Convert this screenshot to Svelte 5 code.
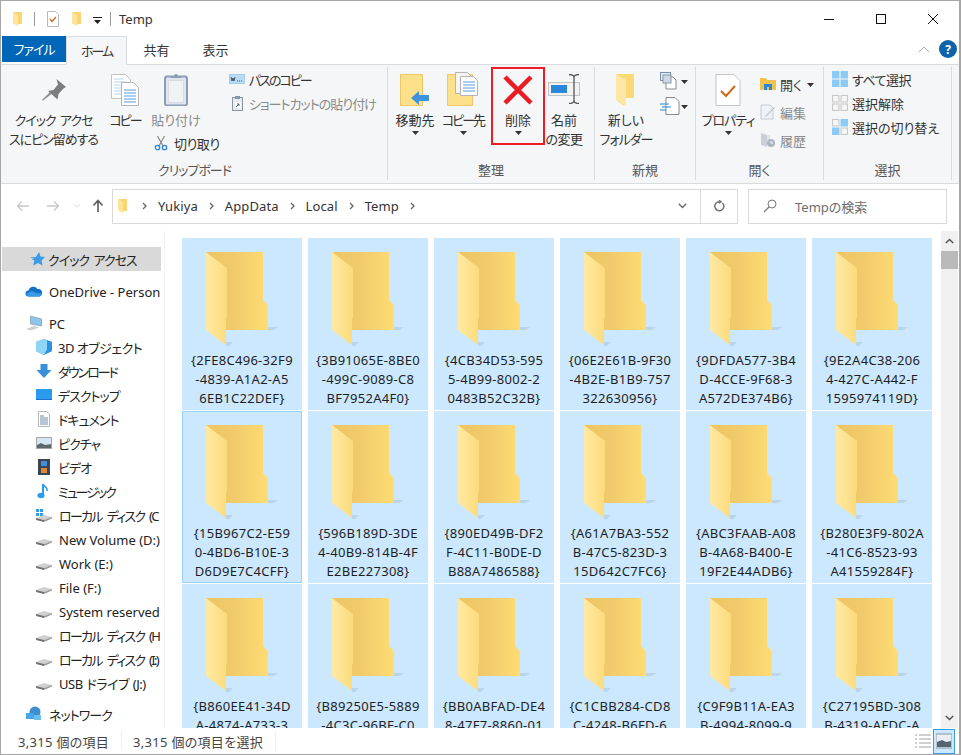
<script>
  const files = [
    ['{2FE8C496-32F9', '-4839-A1A2-A5', '6EB1C22DEF}'],
    ['{3B91065E-8BE0', '-499C-9089-C8', 'BF7952A4F0}'],
    ['{4CB34D53-595', '5-4B99-8002-2', '0483B52C32B}'],
    ['{06E2E61B-9F30', '-4B2E-B1B9-757', '322630956}'],
    ['{9DFDA577-3B4', 'D-4CCE-9F68-3', 'A572DE374B6}'],
    ['{9E2A4C38-206', '4-427C-A442-F', '1595974119D}'],
    ['{15B967C2-E59', '0-4BD6-B10E-3', 'D6D9E7C4CFF}'],
    ['{596B189D-3DE', '4-40B9-814B-4F', 'E2BE227308}'],
    ['{890ED49B-DF2', 'F-4C11-B0DE-D', 'B88A7486588}'],
    ['{A61A7BA3-552', 'B-47C5-823D-3', '15D642C7FC6}'],
    ['{ABC3FAAB-A08', 'B-4A68-B400-E', '19F2E44ADB6}'],
    ['{B280E3F9-802A', '-41C6-8523-93', 'A41559284F}'],
    ['{B860EE41-34D', 'A-4874-A733-3'],
    ['{B89250E5-5889', '-4C3C-96BF-C0'],
    ['{BB0ABFAD-DE4', '8-47F7-8860-01'],
    ['{C1CBB284-CD8', 'C-4248-B6FD-6'],
    ['{C9F9B11A-EA3', 'B-4994-8099-9'],
    ['{C27195BD-308', 'B-4319-AFDC-A']
  ];

  const focused = 6;

  const drives = [
    { label: 'ローカル ディスク (C', win: true, cls: 'kd' },
    { label: 'New Volume (D:)', cls: 'lat' },
    { label: 'Work (E:)', cls: 'lat' },
    { label: 'File (F:)', cls: 'lat' },
    { label: 'System reserved', cls: 'lat' },
    { label: 'ローカル ディスク (H', cls: 'kd' },
    { label: 'ローカル ディスク (I:)', cls: 'kd' },
    { label: 'USB ドライブ (J:)', cls: 'k05 usb' }
  ];
</script>

{#snippet smallFolder()}
  <svg class="ico16" viewBox="0 0 16 16">
    <path d="M3 1h9v12H8v2L3 12z" fill="#fbd56f" />
    <path d="M3 1l5 3v11l-5-3z" fill="#fde49a" />
  </svg>
{/snippet}

{#snippet disk(win)}
  <svg class="ico16 wide" viewBox="0 0 18 16">
    {#if win}
      <rect x="1" y="2" width="3" height="3" fill="#2f9be8" />
      <rect x="5" y="2" width="3" height="3" fill="#2f9be8" />
      <rect x="1" y="6" width="3" height="3" fill="#2f9be8" />
      <rect x="5" y="6" width="3" height="3" fill="#2f9be8" />
    {/if}
    <path d="M1 11l8-3 8 2-8 3z" fill="#d0d0d0" />
    <path d="M1 11l8 2v2l-8-2z" fill="#6e6e6e" />
    <path d="M9 13l8-3v1.500l-8 3.500z" fill="#9a9a9a" />
  </svg>
{/snippet}

{#snippet caret()}
  <svg class="caret" viewBox="0 0 7 4"><path d="M0 0h7L3.500 4z" fill="#333" /></svg>
{/snippet}

{#snippet chevron()}
  <svg class="chev" viewBox="0 0 5 8"><path d="M1 1l3 3-3 3" fill="none" stroke="#6a6a6a" stroke-width="1.400" /></svg>
{/snippet}

<div class="window">
  <header class="titlebar">
    <div class="qat">
      {@render smallFolder()}
      <span class="bar"></span>
      <svg class="ico16" viewBox="0 0 16 16">
        <path d="M2.500.500h8l3 3v12h-11z" fill="#fff" stroke="#b9b9b9" />
        <path d="M5 8l2 2.500L11 6" fill="none" stroke="#d2691e" stroke-width="1.300" />
      </svg>
      {@render smallFolder()}
      <svg class="qat-drop" viewBox="0 0 9 7">
        <rect y="0" width="9" height="1" fill="#222" />
        <path d="M1 3h7L4.500 7z" fill="#222" />
      </svg>
      <span class="bar"></span>
      <span class="title">Temp</span>
    </div>
    <div class="winbtns">
      <svg viewBox="0 0 12 12"><path d="M1 6.500h10" stroke="#111" fill="none" /></svg>
      <svg viewBox="0 0 12 12"><rect x="1.500" y="1.500" width="9" height="9" stroke="#111" fill="none" /></svg>
      <svg viewBox="0 0 12 12"><path d="M1 1l10 10M11 1L1 11" stroke="#111" fill="none" /></svg>
    </div>
  </header>

  <nav class="tabs">
    <span class="tab file k1">ファイル</span>
    <span class="tab active k2">ホーム</span>
    <span class="tab">共有</span>
    <span class="tab">表示</span>
    <span class="tabs-right">
      <svg class="collapse" viewBox="0 0 12 7"><path d="M.500 6.500L6 1l5.500 5.500" fill="none" stroke="#b0b0b0" /></svg>
      <span class="help">?</span>
    </span>
  </nav>

  <section class="ribbon">
    <div class="group g-clip">
      <div class="group-body">
        <div class="btn w-pin">
          <svg class="big pin" viewBox="0 0 24 22">
            <path d="M14.500 0L24 8l-2.500 1.500-5 5.500-1 5.500L6 12l5.500-1 4.500-5.500z" fill="#7b7d80" />
            <path d="M8 13l-8 8 .800.800 9-7z" fill="#8c8e90" />
          </svg>
          <span class="k1">クイック アクセ<br />スにピン留めする</span>
        </div>
        <div class="btn w-copy">
          <svg class="big" viewBox="0 0 28 32">
            <path d="M.500.500h14l5 5v19H.500z" fill="#fff" stroke="#c4c4c4" />
            <path d="M3 5h9M3 8h13M3 11h13M3 14h13M3 17h13M3 20h13" stroke="#b9d5f0" />
            <path d="M10.500 8.500h12l5 5v18h-17z" fill="#fff" stroke="#b5b5b5" />
            <path d="M13 16h12M13 19h12M13 22h12M13 25h12M13 28h12" stroke="#8fbdec" stroke-width="1.500" />
          </svg>
          <span class="k2">コピー</span>
        </div>
        <div class="stack-clip">
          <div class="row-clip">
            <div class="btn w-paste muted">
              <svg class="big" viewBox="0 0 24 32">
                <rect x="1" y="2.500" width="22" height="29" rx="2" fill="#dfe5ee" stroke="#8d9cb4" stroke-width="2" />
                <path d="M7 4V2h3l1-2h2l1 2h3v2z" fill="#8d9cb4" />
                <rect x="4.500" y="6.500" width="15" height="22" fill="#f0f2f6" stroke="#c8ced8" stroke-dasharray="1 1" />
              </svg>
              <span>貼り付け</span>
            </div>
            <div class="small-col">
              <div class="small">
                <svg class="ico16" viewBox="0 0 16 12">
                  <rect x=".500" y="1.500" width="15" height="9" fill="#b8dcf8" stroke="#a5cdea" />
                  <path d="M2 4l1 4 1-3 1 3 1-4M8 8h1M10 8h1M12 8h1" stroke="#333" fill="none" stroke-width=".800" />
                </svg>
                <span class="k2">パスのコピー</span>
              </div>
              <div class="small muted">
                <svg class="ico16" viewBox="0 0 16 16">
                  <rect x="3.500" y="2.500" width="10" height="13" fill="#e6eaee" stroke="#8a97a5" />
                  <rect x="6" y="1" width="5" height="3" fill="#8a97a5" />
                  <rect x="6" y="7" width="6" height="6" fill="#fff" />
                  <path d="M7 12l3-3M8 9h2v2" stroke="#4a6a8a" fill="none" />
                </svg>
                <span class="k1">ショートカットの貼り付け</span>
              </div>
            </div>
          </div>
          <div class="small cut">
            <svg class="ico16" viewBox="0 0 16 16">
              <path d="M4.500 1l5.500 10M11.500 1L6 11" stroke="#888" fill="none" stroke-width="1.200" />
              <circle cx="4.500" cy="12.500" r="2.200" fill="none" stroke="#2b88d8" stroke-width="1.300" />
              <circle cx="11.500" cy="12.500" r="2.200" fill="none" stroke="#2b88d8" stroke-width="1.300" />
            </svg>
            <span class="k05">切り取り</span>
          </div>
        </div>
      </div>
      <div class="group-label k1">クリップボード</div>
    </div>

    <div class="group g-org">
      <div class="group-body">
        <div class="btn w-move">
          <svg class="big" viewBox="0 0 30 32">
            <path d="M.500.500h22v31H.500z" fill="#fde08a" stroke="#eec667" />
            <path d="M11 24l8-7v4h10v6H19v4z" fill="#3f93de" />
          </svg>
          <span>移動先</span>
          {@render caret()}
        </div>
        <div class="btn w-copyto">
          <svg class="big tall" viewBox="0 0 32 34">
            <path d="M.500 2.500h25v31H.500z" fill="#fde08a" stroke="#eec667" />
            <path d="M8.500.500h12l4 4v17h-16z" fill="#f4f4f4" stroke="#b5b5b5" />
            <path d="M13.500 4.500h13l4 4v15h-17z" fill="#fff" stroke="#b5b5b5" />
            <path d="M16 10h12M16 13h12M16 16h12M16 19h12" stroke="#8fbdec" stroke-width="1.500" />
          </svg>
          <span class="k2">コピー先</span>
          {@render caret()}
        </div>
        <div class="btn w-del">
          <svg class="big" viewBox="0 0 30 30">
            <path d="M2 2l26 26M28 2L2 28" stroke="#e81c24" stroke-width="4.500" fill="none" />
          </svg>
          <span>削除</span>
          {@render caret()}
        </div>
        <div class="btn w-rename">
          <svg class="big" viewBox="0 0 33 30">
            <rect x=".500" y="8.500" width="31" height="13" fill="#f2f2f2" stroke="#c4c4c4" />
            <rect x="3" y="11" width="16" height="8" fill="#2b88d8" />
            <path d="M21 .500c3 0 5 .500 5 3v23c0 2.500-2 3-5 3M31 .500c-3 0-5 .500-5 3v23c0 2.500 2 3 5 3" stroke="#555" fill="none" stroke-width="1.300" />
          </svg>
          <span>名前<br /><span class="k05">の変更</span></span>
        </div>
      </div>
      <div class="group-label">整理</div>
    </div>

    <div class="group g-new">
      <div class="group-body">
        <div class="btn w-newf">
          <svg class="big" viewBox="0 0 24 34">
            <path d="M2 1h18v24h-8l-2 8-8-6z" fill="#fcd977" />
            <path d="M2 1l10 6v26l-10-6z" fill="#fee7a2" />
          </svg>
          <span>新しい<br /><span class="k1">フォルダー</span></span>
        </div>
        <div class="new-col">
          <div class="mini">
            <svg class="ico16 wide2" viewBox="0 0 20 18">
              <rect x=".500" y=".500" width="10" height="8" fill="#d9ecfb" stroke="#7b8ea5" />
              <path d="M6 5h7l3 3v9H6z" fill="#fff" stroke="#8a8a8a" />
              <rect x="3" y="3" width="8" height="8" fill="#cfd8e3" stroke="#8a97a5" />
            </svg>
            {@render caret()}
          </div>
          <div class="mini">
            <svg class="ico16 wide2" viewBox="0 0 20 18">
              <path d="M6 .500h9l4 4v13H6z" fill="#fff" stroke="#8a8a8a" />
              <path d="M0 7h9M2 10h9M0 13h6" stroke="#2b88d8" fill="none" stroke-width="1.200" />
            </svg>
            {@render caret()}
          </div>
        </div>
      </div>
      <div class="group-label">新規</div>
    </div>

    <div class="group g-open">
      <div class="group-body">
        <div class="btn w-prop">
          <svg class="big" viewBox="0 0 26 32">
            <path d="M1 .500h18l6 6v25H1z" fill="#fff" stroke="#c4c4c4" />
            <path d="M6 17l5 5 9-10" stroke="#cf6a14" stroke-width="2" fill="none" />
          </svg>
          <span class="k1">プロパティ</span>
          {@render caret()}
        </div>
        <div class="small-col tight">
          <div class="small">
            <svg class="ico16" viewBox="0 0 16 14">
              <path d="M0 1h6l1 2h9v10H0z" fill="#f2c14e" />
              <path d="M4 7h8v6H9v-3H7v3H4z" fill="#2b88d8" />
            </svg>
            <span>開く</span>
            {@render caret()}
          </div>
          <div class="small muted">
            <svg class="ico16" viewBox="0 0 16 16">
              <path d="M1 1h9l3 3v11H1z" fill="#eef2f6" stroke="#c3ccd6" />
              <path d="M6 11l8-8 1 1-8 8-2 1z" fill="#c3ccd6" />
            </svg>
            <span>編集</span>
          </div>
          <div class="small muted">
            <svg class="ico16" viewBox="0 0 16 16">
              <path d="M1 1l6 2v12l-6-2z" fill="#c9d0d8" />
              <path d="M7 3h3v6H7z" fill="#dfe4ea" />
              <circle cx="11" cy="11" r="4" fill="#aeb6bf" />
              <path d="M11 9v2h2" stroke="#fff" fill="none" />
            </svg>
            <span>履歴</span>
          </div>
        </div>
      </div>
      <div class="group-label">開く</div>
    </div>

    <div class="group g-sel">
      <div class="group-body">
        <div class="small-col sel">
          <div class="small">
            <svg class="ico16" viewBox="0 0 15 15">
              <path d="M0 0h7v7H0zM8 0h7v7H8zM0 8h7v7H0zM8 8h7v7H8z" fill="#8ccbf5" />
            </svg>
            <span class="k05">すべて選択</span>
          </div>
          <div class="small">
            <svg class="ico16" viewBox="0 0 15 15">
              <path d="M.500.500h6v6h-6zM8.500.500h6v6h-6zM.500 8.500h6v6h-6zM8.500 8.500h6v6h-6z" fill="#f6f6f6" stroke="#c8c8c8" />
            </svg>
            <span>選択解除</span>
          </div>
          <div class="small">
            <svg class="ico16" viewBox="0 0 15 15">
              <path d="M.500.500h6v6h-6zM8.500 8.500h6v6h-6z" fill="#f6f6f6" stroke="#c8c8c8" />
              <path d="M8 0h7v7H8zM0 8h7v7H0z" fill="#8ccbf5" />
            </svg>
            <span>選択の切り替え</span>
          </div>
        </div>
      </div>
      <div class="group-label">選択</div>
    </div>
  </section>

  <div class="addr-row">
    <div class="nav-arrows">
      <svg viewBox="0 0 14 12"><path d="M13 6H2M6 1.500L1.500 6 6 10.500" fill="none" stroke="#c8c8c8" stroke-width="1.300" /></svg>
      <svg viewBox="0 0 14 12"><path d="M1 6h11M8 1.500L12.500 6 8 10.500" fill="none" stroke="#c8c8c8" stroke-width="1.300" /></svg>
      <svg class="down" viewBox="0 0 8 5"><path d="M.500.500L4 4 7.500.500" fill="none" stroke="#c8c8c8" /></svg>
      <svg viewBox="0 0 12 14"><path d="M6 13V2M1.500 6.500L6 1.500l4.500 5" fill="none" stroke="#5c5c5c" stroke-width="1.600" /></svg>
    </div>
    <div class="addr">
      {@render smallFolder()}
      <span class="crumbs">
        {@render chevron()}<span>Yukiya</span>
        {@render chevron()}<span>AppData</span>
        {@render chevron()}<span>Local</span>
        {@render chevron()}<span>Temp</span>
        {@render chevron()}
      </span>
      <span class="addr-drop">
        <svg viewBox="0 0 9 6"><path d="M.800.800L4.500 4.500 8.200.800" fill="none" stroke="#6a6a6a" stroke-width="1.400" /></svg>
      </span>
      <span class="refresh">
        <svg viewBox="0 0 12 12"><path d="M9.500 3a4.500 4.500 0 1 1-3-1.300M6 .300l2 1.500L6 3.300" fill="none" stroke="#6a6a6a" stroke-width="1.400" /></svg>
      </span>
    </div>
    <div class="search">
      <svg viewBox="0 0 14 14"><circle cx="9" cy="5" r="4" fill="none" stroke="#777" /><path d="M6 8l-5 5" stroke="#777" stroke-width="1.300" /></svg>
      <span>Tempの検索</span>
    </div>
  </div>

  <div class="main">
    <aside class="sidenav">
      <div class="nav-item lvl0 current">
        <svg class="ico16" viewBox="0 0 16 16"><path d="M10 1l1.500 4.500L16 6l-3.500 3.500 1 5L9 12l-5 2.500 1.500-5-3-1.500h3L1 6.500l6-.500z" fill="#3a9be8" /></svg>
        <span class="k1">クイック アクセス</span>
      </div>
      <div class="nav-item lvl0 gap">
        <svg class="ico16 wide" viewBox="0 0 18 12">
          <path d="M3.500 11.500a3 3 0 0 1 0-6 5 5 0 0 1 9-1.500 3.500 3.500 0 0 1 1.500 7.500z" fill="#1670c4" />
          <path d="M1 9l6-3 4 2 6 .500-2 3H3.500z" fill="#3a9be8" />
        </svg>
        <span class="lat">OneDrive - Person</span>
      </div>
      <div class="nav-item lvl0 gap">
        <svg class="ico16 wide" viewBox="0 0 18 16">
          <path d="M5.500 1l11 3v7l-11-2z" fill="#8cc6ee" stroke="#8a97a5" stroke-width=".700" />
          <path d="M1 14l8-3 5 1.500-8 3z" fill="#c9ced4" />
        </svg>
        <span class="lat">PC</span>
      </div>
      <div class="nav-item lvl1">
        <svg class="ico16" viewBox="0 0 16 16">
          <path d="M8 0l8 3v9l-8 4-8-4V3z" fill="#2f8fdc" />
          <path d="M0 3l8-3 3 1.500v9L8 16l-8-4z" fill="#8fd5f5" />
          <path d="M11 1.500L16 3v9l-5 2z" fill="#2c93e0" />
        </svg>
        <span class="k05">3D オブジェクト</span>
      </div>
      <div class="nav-item lvl1">
        <svg class="ico16" viewBox="0 0 16 16"><path d="M4.500 1h7v6h4L8 15 .500 7h4z" fill="#3a8fdc" /></svg>
        <span class="k2">ダウンロード</span>
      </div>
      <div class="nav-item lvl1">
        <svg class="ico16" viewBox="0 0 16 14"><rect y="1" width="16" height="11" fill="#2b9bf0" /><rect y="11" width="16" height="1" fill="#1a73c8" /></svg>
        <span class="k1">デスクトップ</span>
      </div>
      <div class="nav-item lvl1">
        <svg class="ico16" viewBox="0 0 16 16">
          <path d="M2.500.500h8l3 3v12h-11z" fill="#fff" stroke="#b5b5b5" />
          <path d="M4 5h4M4 7h8M4 9h8M4 11h8M4 13h8" stroke="#6a8aa8" />
        </svg>
        <span class="k1">ドキュメント</span>
      </div>
      <div class="nav-item lvl1">
        <svg class="ico16" viewBox="0 0 16 14">
          <rect x=".500" y="1.500" width="15" height="11" fill="#d5e6f5" stroke="#a5a5a5" />
          <path d="M1 9l4-2 4 2 6-1v4H1z" fill="#5b6a68" />
        </svg>
        <span class="k1">ピクチャ</span>
      </div>
      <div class="nav-item lvl1">
        <svg class="ico16" viewBox="0 0 16 16">
          <rect x="2" width="12" height="16" fill="#3c4650" />
          <rect x="5" y="2" width="6" height="5" fill="#3f8fdc" />
          <rect x="5" y="9" width="6" height="5" fill="#d98a3a" />
        </svg>
        <span class="k1">ビデオ</span>
      </div>
      <div class="nav-item lvl1">
        <svg class="ico16" viewBox="0 0 16 16">
          <path d="M7 1v10" stroke="#2b9bf0" stroke-width="2" />
          <ellipse cx="5" cy="12.500" rx="3.500" ry="2.800" fill="#2b9bf0" />
          <path d="M7 1c1 3 5 3 4 7" stroke="#2b9bf0" stroke-width="1.500" fill="none" />
        </svg>
        <span class="k2">ミュージック</span>
      </div>
      {#each drives as d}
        <div class="nav-item lvl1">
          {@render disk(d.win)}
          <span class={d.cls}>{d.label}</span>
        </div>
      {/each}
      <div class="nav-item lvl0 net">
        <svg class="ico16 wide" viewBox="0 0 18 16">
          <circle cx="10" cy="6" r="5.500" fill="#3f8fd0" />
          <rect x="1" y="7" width="8" height="6" fill="#47a5ea" />
          <rect x="9" y="9" width="7" height="5" fill="#6fbcee" />
        </svg>
        <span class="k1">ネットワーク</span>
      </div>
    </aside>

    <div class="files">
      {#each files as lines, i}
        <div class="file-item" class:focus={i === focused}>
          <svg class="folder" viewBox="0 0 72 96">
            <path d="M62 75h10l-4 3h-6zM20 90h7l-4 4-3 0z" fill="#a9bfd6" opacity=".5" />
            <path d="M0 0H56.500a.5.5 0 0 1 .5.500V48l5 5V78H20z" fill="url(#back{i})" />
            <path d="M0 0l21 16V66l-1 1V93L0 78z" fill="url(#front{i})" />
            <defs>
              <linearGradient id="back{i}" x1="0" x2="1" y1="0" y2="0">
                <stop offset="0" stop-color="#ecc463" />
                <stop offset=".45" stop-color="#f1cb6b" />
                <stop offset="1" stop-color="#ffdc74" />
              </linearGradient>
              <linearGradient id="front{i}" x1="0" x2="1" y1="0" y2="0">
                <stop offset="0" stop-color="#ffe9a3" />
                <stop offset="1" stop-color="#fcdb7b" />
              </linearGradient>
            </defs>
          </svg>
          <div class="file-name">
            {#each lines as l}<span>{l}</span>{/each}
          </div>
        </div>
      {/each}
    </div>

    <div class="scrollbar">
      <svg viewBox="0 0 9 6"><path d="M.800 5L4.500 1.500 8.200 5" fill="none" stroke="#555" stroke-width="1.600" /></svg>
      <div class="thumb"></div>
      <div class="track"></div>
      <svg viewBox="0 0 9 6"><path d="M.800 1L4.500 4.500 8.200 1" fill="none" stroke="#555" stroke-width="1.600" /></svg>
    </div>
  </div>

  <footer class="status">
    <span class="s1">3,315 個の項目</span>
    <span class="s2">3,315 個の項目を選択</span>
    <span class="views">
      <span class="view">
        <svg viewBox="0 0 16 16"><path d="M0 2h2M4 2h12M0 6h2M4 6h12M0 10h2M4 10h12M0 14h2M4 14h12" stroke="#a0a0a0" /></svg>
      </span>
      <span class="view on">
        <svg viewBox="0 0 16 16">
          <rect y="1" width="16" height="14" fill="#e8eef4" stroke="#8a97a5" />
          <path d="M1 9l5-2 4 2 5-1v6H1z" fill="#55646e" />
        </svg>
      </span>
    </span>
  </footer>
</div>

<style>
  :global(body) {
    margin: 0;
    background: #fff;
  }

  .window {
    box-sizing: border-box;
    width: 961px;
    height: 755px;
    border: 1px solid #a6a6a6;
    border-right-width: 2px;
    overflow: hidden;
    display: flex;
    flex-direction: column;
    background: #fff;
    color: #1e1e1e;
    font-family: "Noto Sans", "Noto Sans CJK JP", sans-serif;
    font-size: 13px;
    font-feature-settings: "palt";
  }

  svg {
    display: block;
    flex: none;
  }

  /* kana in the original UI font runs narrower than Noto CJK */
  .k05 {
    letter-spacing: -0.5px;
  }

  .k1 {
    letter-spacing: -1px;
    word-spacing: 2px;
  }

  .k2 {
    letter-spacing: -2px;
  }

  .kd {
    letter-spacing: -1.7px;
    word-spacing: 3px;
  }

  .usb {
    word-spacing: 1px;
  }

  .lat {
    padding-top: 2px;
  }

  .ico16 {
    width: 16px;
    height: 16px;
  }

  .ico16.wide {
    width: 18px;
  }

  .ico16.wide2 {
    width: 20px;
    height: 18px;
  }

  .titlebar {
    height: 35px;
    flex: none;
    display: flex;
    align-items: center;
    justify-content: space-between;
  }

  .qat {
    display: flex;
    align-items: center;
    padding-left: 9px;
    height: 100%;
  }

  .qat > svg:nth-child(3) {
    margin-left: 10px;
  }

  .qat > svg:nth-child(4) {
    margin-left: 8px;
  }

  .bar {
    width: 1px;
    height: 14px;
    background: #9a9a9a;
    margin-left: 8px;
  }

  .qat-drop {
    width: 9px;
    height: 7px;
    margin-left: 8px;
    margin-top: 3px;
  }

  .title {
    margin-left: 8px;
    font-size: 13px;
    color: #333;
  }

  .winbtns {
    display: flex;
    gap: 40px;
    margin-right: 20px;
  }

  .winbtns svg {
    width: 12px;
    height: 12px;
  }

  .tabs {
    height: 29px;
    flex: none;
    display: flex;
    box-sizing: border-box;
    border-bottom: 1px solid #dadbdc;
    padding-left: 1px;
  }

  .tab {
    display: flex;
    align-items: center;
    justify-content: center;
    width: 59px;
    height: 28px;
    box-sizing: border-box;
    padding-bottom: 1px;
    color: #333;
  }

  .tab.file {
    width: 64px;
    height: 26px;
    background: #0067b8;
    color: #fff;
  }

  .tab.active {
    width: 61px;
    height: 29px;
    background: #f5f6f7;
    border: 1px solid #dadbdc;
    border-bottom: none;
  }

  .tabs-right {
    margin-left: auto;
    display: flex;
    align-items: center;
    gap: 9px;
    padding: 0 2px 2px 0;
  }

  .collapse {
    width: 12px;
    height: 7px;
  }

  .help {
    width: 18px;
    height: 18px;
    border-radius: 50%;
    background: #0f62ac;
    color: #fff;
    font-size: 12px;
    font-weight: 700;
    display: flex;
    align-items: center;
    justify-content: center;
  }

  .ribbon {
    height: 119px;
    flex: none;
    box-sizing: border-box;
    display: flex;
    background: #f5f6f7;
    border-bottom: 1px solid #dadbdc;
    padding-left: 1px;
    padding-top: 2px;
  }

  .group {
    box-sizing: border-box;
    height: 113px;
    display: flex;
    flex-direction: column;
    border-right: 1px solid #dadbdc;
  }

  .group-body {
    height: 93px;
    display: flex;
  }

  .group-label {
    text-align: center;
    line-height: 20px;
    color: #555;
  }

  .g-clip {
    width: 386px;
  }

  .g-org {
    width: 207px;
  }

  .g-new {
    width: 101px;
  }

  .g-open {
    width: 128px;
  }

  .g-sel {
    width: 128px;
  }

  .btn {
    display: flex;
    flex-direction: column;
    align-items: center;
    text-align: center;
    line-height: 19px;
    color: #333;
    white-space: nowrap;
  }

  .btn .big {
    height: 32px;
    width: auto;
    margin: 7px 0 5px;
  }

  .btn .big.pin {
    height: 22px;
    margin: 12px 0 10px;
  }

  .btn .big.tall {
    height: 34px;
    margin: 5px 0 5px;
  }

  .btn.muted {
    color: #8a8a8a;
  }

  .w-pin {
    width: 103px;
  }

  .w-copy {
    width: 40px;
  }

  .stack-clip {
    display: flex;
    flex-direction: column;
  }

  .row-clip {
    display: flex;
    height: 58px;
  }

  .w-paste {
    width: 62px;
    height: 58px;
  }

  .small-col {
    display: flex;
    flex-direction: column;
    gap: 6px;
    padding: 3px 0 0 22px;
  }

  .small {
    display: flex;
    align-items: center;
    gap: 4px;
    height: 18px;
    white-space: nowrap;
    color: #333;
  }

  .small.muted {
    color: #8a8a8a;
  }

  .small .caret {
    margin-left: 1px;
  }

  .cut {
    margin: 9px 0 0 8px;
    gap: 5px;
  }

  .g-org .group-body {
    padding-left: 2px;
  }

  .w-move {
    width: 48px;
    margin-left: 1px;
  }

  .w-copyto {
    width: 48px;
  }

  .w-del {
    box-sizing: border-box;
    width: 54px;
    height: 78px;
    margin-left: 4px;
    border: 2px solid #ed1c24;
  }

  .w-del .big {
    height: 30px;
    margin: 6px 0 6px;
  }

  .w-rename {
    width: 42px;
    margin-left: -2px;
  }

  .w-rename .big {
    height: 30px;
    margin: 7px 0 7px;
  }

  .caret {
    width: 7px;
    height: 4px;
    margin-top: 1px;
  }

  .w-newf {
    width: 62px;
  }

  .w-newf .big {
    height: 34px;
    margin: 6px 0 4px;
  }

  .new-col {
    display: flex;
    flex-direction: column;
    gap: 7px;
    margin-left: 3px;
    padding-top: 5px;
  }

  .mini {
    display: flex;
    align-items: center;
    gap: 1px;
  }

  .w-prop {
    width: 52px;
    margin-left: 6px;
  }

  .small-col.tight {
    padding: 8px 0 0 6px;
    gap: 10px;
  }

  .small-col.sel {
    padding: 3px 0 0 8px;
    gap: 6px;
  }

  .addr-row {
    height: 47px;
    flex: none;
    display: flex;
    align-items: center;
    box-sizing: border-box;
    padding-bottom: 3px;
  }

  .nav-arrows {
    width: 111px;
    flex: none;
    display: flex;
    align-items: center;
    padding-left: 15px;
    box-sizing: border-box;
  }

  .nav-arrows svg {
    width: 14px;
    height: 12px;
    margin-right: 16px;
  }

  .nav-arrows svg.down {
    width: 6px;
    height: 4px;
    margin: 0 12px 0 -2px;
  }

  .nav-arrows svg:last-child {
    width: 12px;
    height: 14px;
    margin: 0;
  }

  .addr {
    box-sizing: border-box;
    width: 626px;
    height: 35px;
    border: 1px solid #d9d9d9;
    display: flex;
    align-items: center;
    padding-left: 2px;
  }

  .crumbs {
    display: flex;
    align-items: center;
    gap: 11px;
    margin-left: 11px;
    color: #333;
    letter-spacing: 0.1px;
  }

  .chev {
    width: 5px;
    height: 8px;
  }

  .addr-drop {
    margin-left: auto;
    width: 22px;
  }

  .addr-drop svg {
    width: 9px;
    height: 6px;
  }

  .refresh {
    width: 36px;
    height: 100%;
    border-left: 1px solid #d9d9d9;
    display: flex;
    align-items: center;
    justify-content: center;
  }

  .refresh svg {
    width: 12px;
    height: 12px;
  }

  .search {
    box-sizing: border-box;
    width: 199px;
    height: 35px;
    margin-left: 10px;
    border: 1px solid #d9d9d9;
    display: flex;
    align-items: center;
    padding-left: 14px;
    gap: 18px;
    color: #6d6d6d;
  }

  .search svg {
    width: 14px;
    height: 14px;
  }

  .main {
    flex: 1;
    min-height: 0;
    display: flex;
  }

  .sidenav {
    box-sizing: border-box;
    width: 164px;
    flex: none;
    border-right: 1px solid #f2f2f2;
    padding: 16px 3px 0 1px;
    overflow: hidden;
  }

  .nav-item {
    display: flex;
    align-items: center;
    height: 24px;
    white-space: nowrap;
    overflow: hidden;
    color: #222;
  }

  .nav-item svg {
    margin-right: 6px;
  }

  .lvl0 {
    padding-left: 24px;
  }

  .lvl1 {
    padding-left: 34px;
  }

  .lvl1 .ico16.wide {
    margin-right: 6px;
    margin-left: -1px;
  }

  .lvl0 .ico16.wide {
    margin-left: -1px;
  }

  .current {
    background: #d9d9d9;
    padding-left: 27px;
  }

  .current svg {
    margin-right: 3px;
  }

  .gap {
    margin-top: 8px;
  }

  .net {
    margin-top: 7px;
  }

  .files {
    flex: 1;
    min-width: 0;
    overflow: hidden;
    box-sizing: border-box;
    padding: 7px 0 0 17px;
    display: grid;
    grid-template-columns: repeat(6, 120px);
    grid-auto-rows: 172px;
    column-gap: 6px;
    row-gap: 1px;
  }

  .file-item {
    box-sizing: border-box;
    background: #cce8ff;
    display: flex;
    flex-direction: column;
    align-items: center;
  }

  .file-item.focus {
    border: 1px solid #99d1ff;
  }

  .folder {
    width: 72px;
    height: 96px;
    margin-top: 14px;
  }

  .focus .folder {
    margin-top: 13px;
  }

  .file-name {
    margin-top: 3px;
    display: flex;
    flex-direction: column;
    align-items: center;
    font-size: 13px;
    line-height: 19px;
    letter-spacing: 0.3px;
    color: #1e1e1e;
  }

  .scrollbar {
    width: 17px;
    flex: none;
    margin-right: 1px;
    background: #f0f0f0;
    display: flex;
    flex-direction: column;
    align-items: center;
  }

  .scrollbar svg {
    width: 9px;
    height: 6px;
    margin: 7px 0;
  }

  .thumb {
    width: 100%;
    height: 18px;
    background: #b9b9b9;
  }

  .track {
    flex: 1;
  }

  .status {
    height: 26px;
    flex: none;
    display: flex;
    align-items: center;
    color: #444;
    font-size: 13px;
    box-sizing: border-box;
    padding-left: 17px;
    letter-spacing: 0.3px;
  }

  .s1 {
    width: 103px;
    border-right: 1px solid #eee;
  }

  .s2 {
    margin-left: 11px;
    padding-right: 12px;
    border-right: 1px solid #eee;
  }

  .views {
    margin-left: auto;
    margin-right: 4px;
    display: flex;
    align-items: center;
  }

  .view {
    width: 22px;
    height: 25px;
    box-sizing: border-box;
    display: flex;
    align-items: center;
    justify-content: center;
  }

  .view svg {
    width: 16px;
    height: 16px;
  }

  .view.on {
    border: 1px solid #3c9fe6;
    background: #cce8ff;
    margin-left: -1px;
  }
</style>
